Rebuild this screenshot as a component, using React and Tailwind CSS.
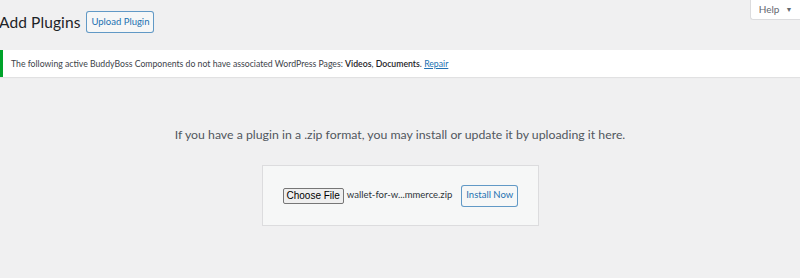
export default function App() {
  return (
    <div className="w-[800px] h-[278px] bg-[#f0f0f1] overflow-hidden flex flex-col" style={{ fontFamily: '"Lato", "Open Sans", sans-serif' }}>
      <div className="flex justify-between items-start h-[50px]">
        <div className="flex items-center h-[44px]">
          <h1 className="text-[15.5px] leading-[24px] text-[#1d2327] ml-[-1px] tracking-[0.1px]">Add Plugins</h1>
          <button className="ml-[6px] h-[22px] w-[68px] border border-[#2271b1]/70 rounded-[3px] bg-[#f6f7f7] text-[9.5px] text-[#2271b1] flex items-center justify-center">Upload Plugin</button>
        </div>
        <div className="w-[50px] h-[20px] bg-white border-l border-b border-[#dcdcde] rounded-bl-[3px] flex items-center justify-center text-[10px] text-[#646970] gap-[6px]">
          <span>Help</span>
          <span className="text-[7px]">▼</span>
        </div>
      </div>
      <div className="h-[27px] bg-white border-l-[3px] border-[#00a32a] shadow-[0_1px_1px_rgba(0,0,0,0.06)] flex items-center pl-[8px] text-[8.7px] text-[#3c434a]">
        <span>The following active BuddyBoss Components do not have associated WordPress Pages: <b className="font-semibold text-[#1d2327]">Videos</b>, <b className="font-semibold text-[#1d2327]">Documents</b>. <a className="text-[#2271b1] underline">Repair</a></span>
      </div>
      <p className="mt-[49px] text-center text-[12.3px] leading-[18px] text-[#50575e]">If you have a plugin in a .zip format, you may install or update it by uploading it here.</p>
      <div className="mt-[21px] mx-auto w-[277px] h-[61px] bg-[#f6f7f7] border border-[#dcdcde] flex items-center pl-[20px]">
        <span className="h-[16px] px-[3px] border border-[#767676] rounded-[2px] bg-[#efefef] text-[10px] leading-[14px] text-black flex items-center" style={{ fontFamily: '"Liberation Sans", Arial, sans-serif' }}>Choose File</span>
        <span className="ml-[3px] text-[9.5px] text-[#2c3338]">wallet-for-w...mmerce.zip</span>
        <button className="ml-[9px] h-[22px] w-[57px] border border-[#2271b1]/70 rounded-[3px] bg-[#f6f7f7] text-[9.5px] text-[#2271b1] flex items-center justify-center">Install Now</button>
      </div>
    </div>
  );
}
